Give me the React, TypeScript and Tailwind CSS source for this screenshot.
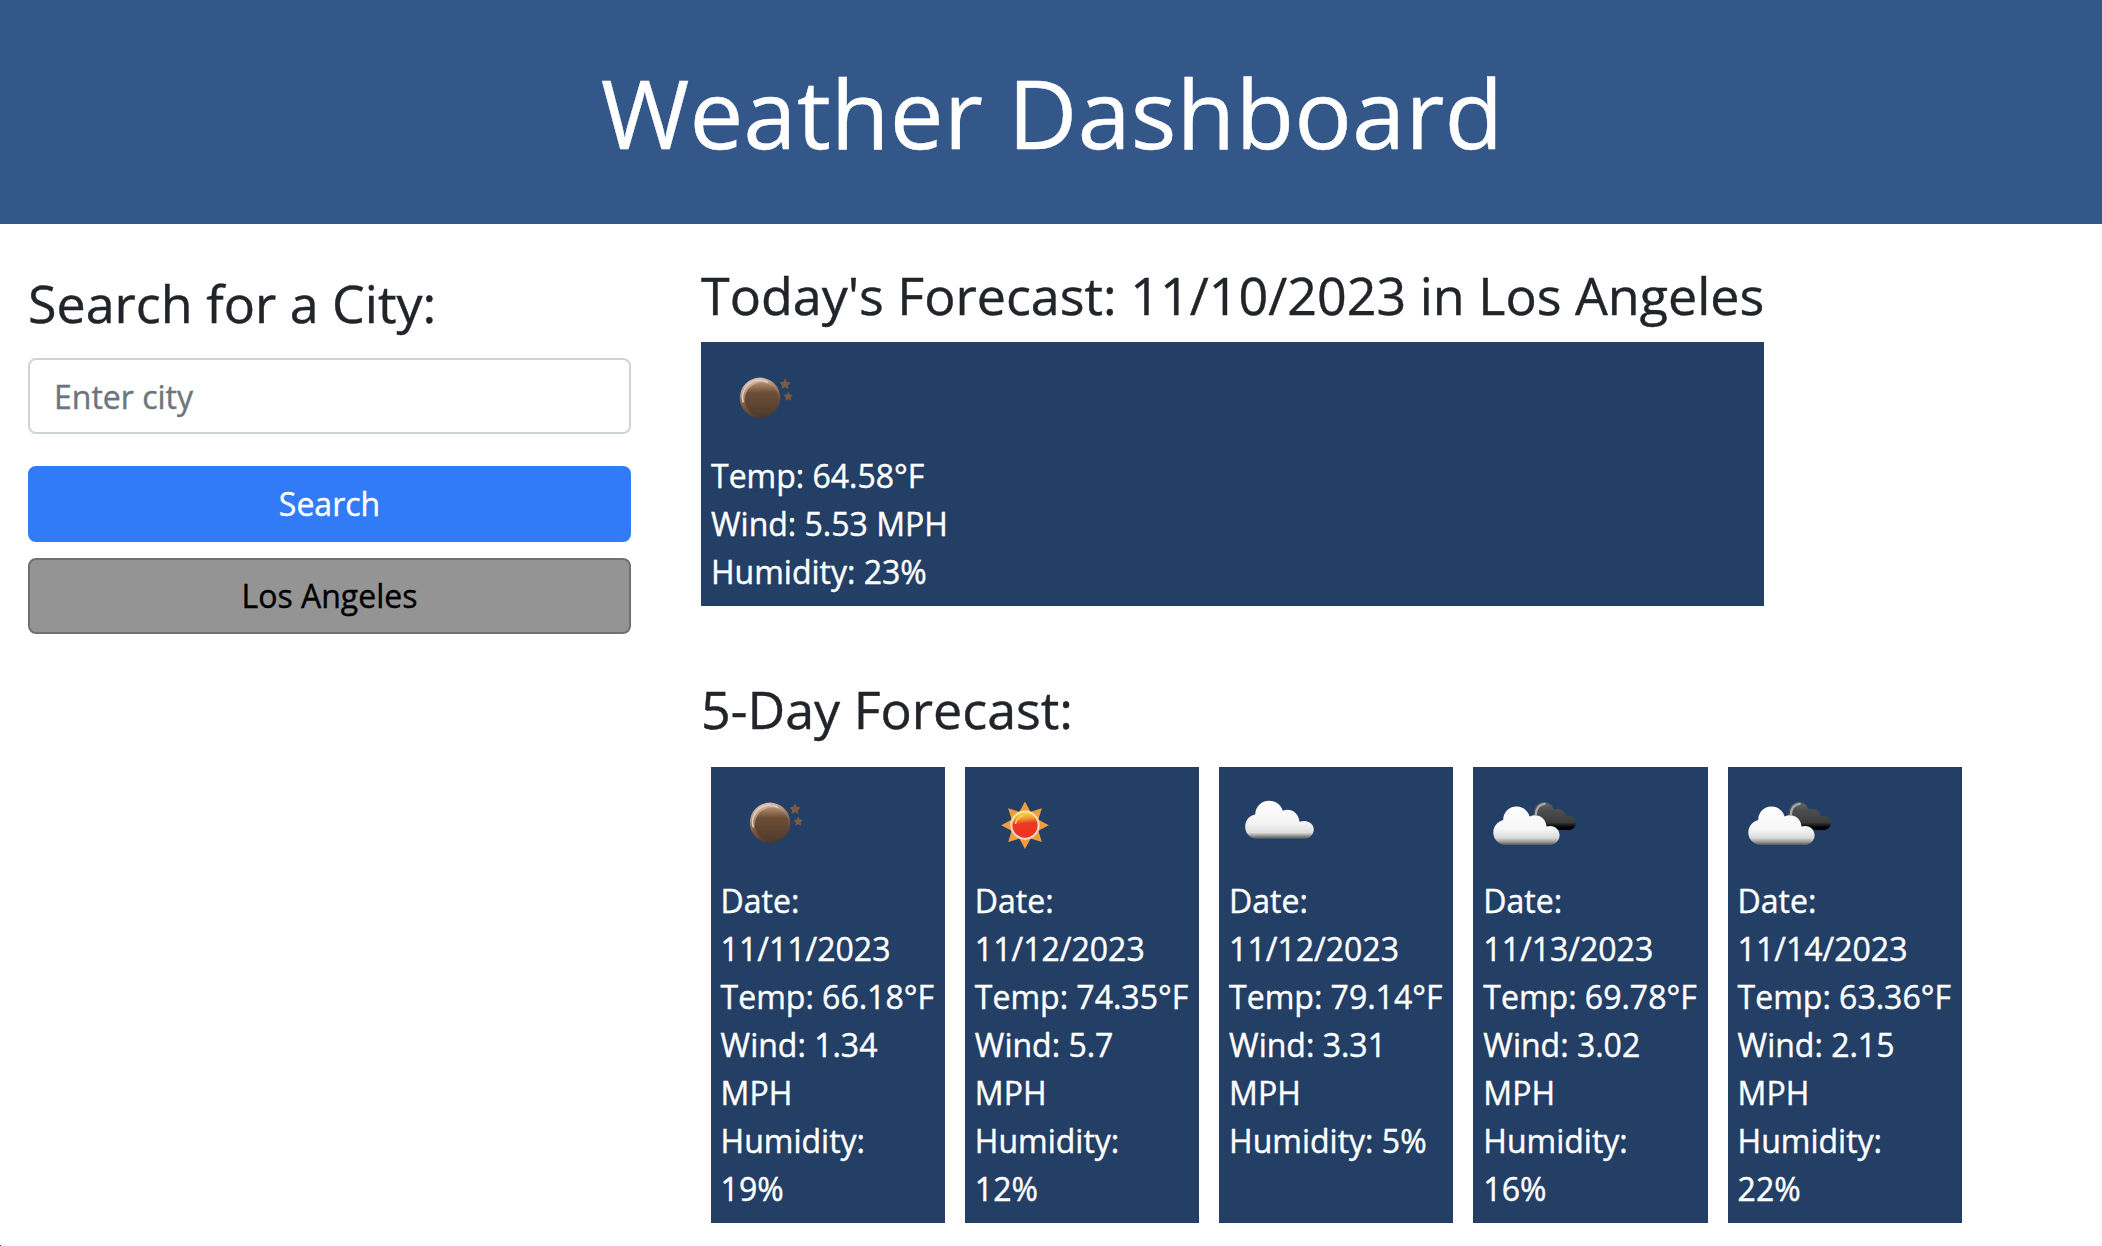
import { useId } from "react";

type IconName = "moon" | "sun" | "cloud" | "clouds";

function Star({ x, y, r }: { x: number; y: number; r: number }) {
  const pts = Array.from({ length: 10 }, (_, i) => {
    const a = -Math.PI / 2 + (i * Math.PI) / 5;
    const d = i % 2 ? r * 0.52 : r;
    return `${x + d * Math.cos(a)},${y + d * Math.sin(a)}`;
  }).join(" ");
  return <polygon points={pts} fill="#7a5a43" />;
}

function WeatherIcon({ name }: { name: IconName }) {
  const id = useId();
  const a = `${id}a`;
  const b = `${id}b`;
  const c = `${id}c`;
  const soft = `${id}s`;
  return (
    <svg className="block size-[100px]" viewBox="0 0 100 100">
      <defs>
        <filter id={soft} x="-10%" y="-10%" width="120%" height="120%">
          <feGaussianBlur stdDeviation="0.65" />
        </filter>
      </defs>
      {name === "moon" && (
        <g filter={`url(#${soft})`}>
          <defs>
            <linearGradient id={a} x1="0.2" y1="0" x2="0.5" y2="1">
              <stop offset="0" stopColor="#e0cbbd" />
              <stop offset="0.3" stopColor="#b8937a" />
              <stop offset="0.6" stopColor="#7d5a42" />
              <stop offset="1" stopColor="#49372a" />
            </linearGradient>
            <linearGradient id={b} x1="0" y1="0" x2="0" y2="1">
              <stop offset="0" stopColor="#b28b6e" />
              <stop offset="0.3" stopColor="#6d4e36" />
              <stop offset="1" stopColor="#4f3b2b" />
            </linearGradient>
          </defs>
          <circle cx="49" cy="45.8" r="20.2" fill={`url(#${a})`} />
          <path d="M32.4 50.2 A16.8 16.8 0 0 1 57 30.5" fill="none" stroke="#dfcdc2" strokeWidth="1.6" />
          <circle cx="50.8" cy="47.5" r="16.9" fill={`url(#${b})`} />
          <Star x={74} y={32.3} r={5.8} />
          <Star x={77.2} y={44.6} r={4.9} />
        </g>
      )}
      {name === "sun" && (
        <g filter={`url(#${soft})`}>
          <defs>
            <linearGradient id={a} x1="0.4" y1="0" x2="0.5" y2="1">
              <stop offset="0" stopColor="#f8d24c" />
              <stop offset="0.22" stopColor="#f2a136" />
              <stop offset="0.44" stopColor="#ea3a24" />
              <stop offset="1" stopColor="#ea3323" />
            </linearGradient>
            <linearGradient id={b} x1="0" y1="0" x2="0" y2="1">
              <stop offset="0" stopColor="#fbe68d" />
              <stop offset="0.45" stopColor="#f5dcc8" />
              <stop offset="1" stopColor="#f3cfc4" />
            </linearGradient>
          </defs>
          {[0, 45, 90, 135, 180, 225, 270, 315].map((deg) => (
            <path
              key={deg}
              d="M50 24.4 L57.2 38 H42.8 Z"
              fill="#ec9f3b"
              transform={`rotate(${deg} 50 48.2)`}
            />
          ))}
          <circle cx="50" cy="48.2" r="14.7" fill={`url(#${b})`} />
          <circle cx="50" cy="48.2" r="12.6" fill={`url(#${a})`} />
          <path d="M40.5 47 A10 10 0 0 1 48 38.6" fill="none" stroke="#f9d968" strokeWidth="1.4" />
        </g>
      )}
      {name === "cloud" && (
        <g filter={`url(#${soft})`}>
          <defs>
            <linearGradient id={a} gradientUnits="userSpaceOnUse" x1="0" y1="24" x2="0" y2="62">
              <stop offset="0" stopColor="#ffffff" />
              <stop offset="0.6" stopColor="#f3f3f3" />
              <stop offset="0.83" stopColor="#dedede" />
              <stop offset="0.91" stopColor="#9a9a9a" />
              <stop offset="1" stopColor="#505050" />
            </linearGradient>
          </defs>
          <path
            d="M26.5 61.8 C20.5 61 16.2 56 16.2 49.8 C16.2 43.5 20.5 38.5 26.3 37.6 C26.3 29.8 32.3 23.8 40 23.8 C46.8 23.8 52 27.8 53.8 33.8 C61 30.5 69.8 35.5 70.5 44.8 C78 42 84.8 46.2 84.8 52.3 C84.8 57.3 81 61 76.8 61.8 Z"
            fill={`url(#${a})`}
          />
        </g>
      )}
      {name === "clouds" && (
        <g filter={`url(#${soft})`}>
          <defs>
            <linearGradient id={b} gradientUnits="userSpaceOnUse" x1="0" y1="25" x2="0" y2="53">
              <stop offset="0" stopColor="#6a6a6a" />
              <stop offset="0.25" stopColor="#505050" />
              <stop offset="0.72" stopColor="#3c3c3c" />
              <stop offset="0.9" stopColor="#060606" />
              <stop offset="1" stopColor="#000000" />
            </linearGradient>
            <linearGradient id={c} gradientUnits="userSpaceOnUse" x1="0" y1="29" x2="0" y2="68">
              <stop offset="0" stopColor="#ffffff" />
              <stop offset="0.6" stopColor="#f6f6f6" />
              <stop offset="0.82" stopColor="#dadada" />
              <stop offset="0.91" stopColor="#a0a0a0" />
              <stop offset="1" stopColor="#585858" />
            </linearGradient>
          </defs>
          <g fill={`url(#${b})`}>
            <circle cx="61" cy="35.4" r="10.2" />
            <circle cx="74.3" cy="40.4" r="8.7" />
            <circle cx="85.7" cy="46" r="7.2" />
            <path d="M50 36 H76 L86 46 V53 H50 Z" />
          </g>
          <path d="M52.8 38 C53 31 56.5 27.2 62.5 26.6" fill="none" stroke="#a8a8a8" strokeWidth="2.4" />
          <path
            d="M21.5 68 C15 67.2 10.3 61.8 10.3 55.5 C10.3 49.3 14.5 44.3 20.2 43 C20.4 35.3 26 29.6 33.3 29.6 C39.8 29.6 44.8 33.5 46.6 39.4 C54.8 36 63 41 63.5 49.6 C70.5 47.3 76.6 52 76.6 58.3 C76.6 63.2 72.8 67.2 68 68 Z"
            fill={`url(#${c})`}
          />
        </g>
      )}
    </svg>
  );
}

const days: { icon: IconName; date: string; temp: string; wind: string; humidity: string }[] = [
  { icon: "moon", date: "11/11/2023", temp: "66.18", wind: "1.34", humidity: "19" },
  { icon: "sun", date: "11/12/2023", temp: "74.35", wind: "5.7", humidity: "12" },
  { icon: "cloud", date: "11/12/2023", temp: "79.14", wind: "3.31", humidity: "5" },
  { icon: "clouds", date: "11/13/2023", temp: "69.78", wind: "3.02", humidity: "16" },
  { icon: "clouds", date: "11/14/2023", temp: "63.36", wind: "2.15", humidity: "22" },
];

export default function App() {
  return (
    <div className="relative h-[1246px] overflow-hidden bg-white font-['Open_Sans','Noto_Sans',sans-serif] text-[32px] leading-[48px] text-[#212529] [-webkit-text-stroke:0.4px]">
      <header className="flex h-56 items-center justify-center bg-[#335789] pb-0.5 pl-0.5">
        <h1 className="text-[96px] leading-[115px] text-white">Weather Dashboard</h1>
      </header>
      <div className="flex">
        <aside className="ml-7 w-[603px] pt-[46px]">
          <h2 className="text-[52px] leading-[65px]">Search for a City:</h2>
          <input
            className="mt-[23px] block h-[76px] w-full rounded-lg border-2 border-[#ced4da] px-6 outline-none placeholder:text-[#6c757d]"
            placeholder="Enter city"
          />
          <button className="mt-8 block h-[76px] w-full rounded-lg bg-[#317bf7] text-white">Search</button>
          <button className="mt-4 block h-[76px] w-full rounded-lg border-2 border-[#707071] bg-[#949495] text-black">
            Los Angeles
          </button>
        </aside>
        <main className="ml-[70px]">
          <section className="w-[1063px] pt-[38px]">
            <h2 className="text-[52px] leading-[65px] whitespace-nowrap">
              Today's Forecast: 11/10/2023 in Los Angeles
            </h2>
            <div className="mt-[15px] h-[264px] bg-[#243f66] p-2.5 text-white">
              <WeatherIcon name="moon" />
              <p>Temp: 64.58°F</p>
              <p>Wind: 5.53 MPH</p>
              <p>Humidity: 23%</p>
            </div>
          </section>
          <section className="pt-[70px]">
            <h2 className="text-[52px] leading-[65px]">5-Day Forecast:</h2>
            <div className="mt-[26px] ml-[9.6px] flex gap-5">
              {days.map((d, i) => (
                <div key={i} className="h-[455.5px] w-[234.25px] bg-[#243f66] p-2.5 text-white">
                  <WeatherIcon name={d.icon} />
                  <p>
                    Date:
                    <br />
                    {d.date}
                  </p>
                  <p className="whitespace-nowrap">Temp: {d.temp}°F</p>
                  <p>
                    Wind: {d.wind}
                    <br />
                    MPH
                  </p>
                  <p>
                    Humidity:{Number(d.humidity) > 9 ? <br /> : " "}
                    {d.humidity}%
                  </p>
                </div>
              ))}
            </div>
          </section>
        </main>
      </div>
      <div className="absolute bottom-0 left-0 size-px bg-[#444444]" />
    </div>
  );
}
